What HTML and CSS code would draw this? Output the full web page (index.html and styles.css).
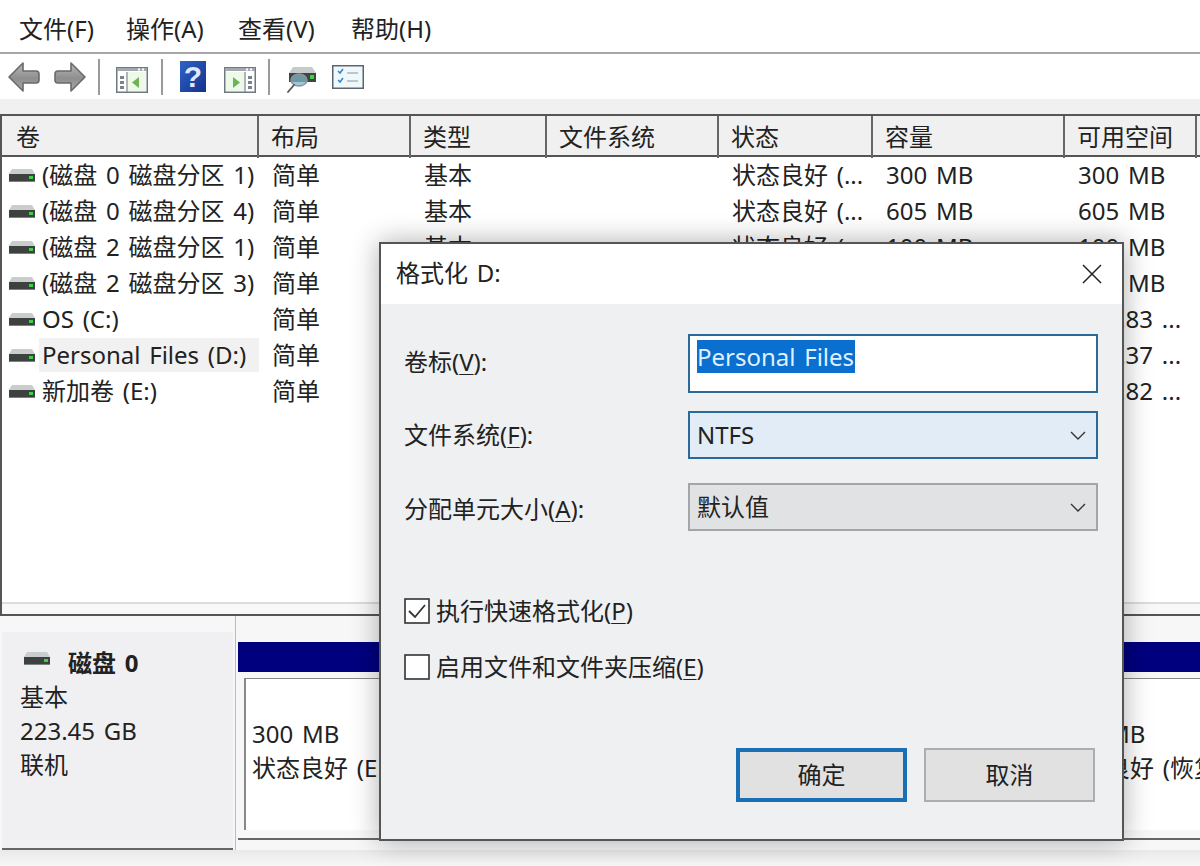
FILE: index.html
```html
<!DOCTYPE html>
<html lang="zh-CN">
<head>
<meta charset="utf-8">
<title>磁盘管理</title>
<link rel="stylesheet" href="styles.css">
</head>
<body>
<svg class="defs" width="0" height="0" aria-hidden="true">
  <defs>
    <linearGradient id="arrowFill" x1="0" y1="0" x2="0" y2="1">
      <stop offset="0" stop-color="#b9b9b9"/><stop offset=".55" stop-color="#8e8e8e"/><stop offset="1" stop-color="#a9a9a9"/>
    </linearGradient>
    <linearGradient id="helpFill" x1="0" y1="0" x2="1" y2="1">
      <stop offset="0" stop-color="#2f63c8"/><stop offset="1" stop-color="#12338c"/>
    </linearGradient>
    <symbol id="drive" viewBox="0 0 26 14">
      <path d="M3 1h20l3 5H0z" fill="#c9cdcb"/>
      <rect x="0" y="6" width="26" height="7" fill="#3d4240"/>
      <rect x="20" y="8" width="4" height="3" fill="#3fd04a"/>
      <rect x="0" y="13" width="26" height="1" fill="#7c807e"/>
    </symbol>
    <symbol id="pane" viewBox="0 0 32 26">
      <rect x=".75" y=".75" width="30.5" height="24.5" fill="#fff" stroke="#6f7780" stroke-width="1.5"/>
      <rect x="1" y="1" width="30" height="3" fill="#a2a9b0"/>
      <rect x="22" y="1.500" width="2" height="2" fill="#fff"/><rect x="26" y="1.500" width="2" height="2" fill="#fff"/>
    </symbol>
  </defs>
</svg>

<div class="window">
  <nav class="menubar">
    <span class="menu">文件(F)</span>
    <span class="menu">操作(A)</span>
    <span class="menu">查看(V)</span>
    <span class="menu">帮助(H)</span>
  </nav>

  <div class="toolbar">
    <svg class="tool arrow" viewBox="0 0 32 30"><path d="M15 1 1 15l14 14v-8h13q3 0 3-3v-6q0-3-3-3H15z" fill="url(#arrowFill)" stroke="#6a6a6a" stroke-width="1.6" stroke-linejoin="round"/></svg>
    <svg class="tool arrow fwd" viewBox="0 0 32 30"><path d="M17 1l14 14-14 14v-8H4q-3 0-3-3v-6q0-3 3-3h13z" fill="url(#arrowFill)" stroke="#6a6a6a" stroke-width="1.6" stroke-linejoin="round"/></svg>
    <i class="sep sep-a"></i>
    <svg class="tool pane-icon" viewBox="0 0 32 26">
      <use href="#pane"/>
      <path d="M11 5v20" stroke="#7b838b" stroke-width="1.200"/>
      <path d="M4 9h4v3H4zM4 14h4v3H4zM4 19h4v3H4z" fill="#7b838b"/>
      <rect x="12" y="5" width="18" height="19" fill="#eef9ea"/>
      <path d="M23 10v11l-7-5.500z" fill="#6cb552"/>
    </svg>
    <i class="sep sep-b"></i>
    <svg class="tool help" viewBox="0 0 26 31">
      <rect width="26" height="31" fill="url(#helpFill)"/>
      <text x="13" y="26" text-anchor="middle" class="help-mark">?</text>
    </svg>
    <svg class="tool pane-icon pane-two" viewBox="0 0 32 26">
      <use href="#pane"/>
      <path d="M21 5v20" stroke="#7b838b" stroke-width="1.200"/>
      <path d="M24 9h4v3h-4zM24 14h4v3h-4zM24 19h4v3h-4z" fill="#7b838b"/>
      <rect x="2" y="5" width="18" height="19" fill="#eef9ea"/>
      <path d="M9 10v11l7-5.500z" fill="#6cb552"/>
    </svg>
    <i class="sep sep-c"></i>
    <svg class="tool find" viewBox="0 0 30 27">
      <path d="M6 1h19l4 6H2z" fill="#c6cbc9"/>
      <rect x="2" y="7" width="27" height="9" fill="#3e4644"/>
      <rect x="23" y="9" width="4" height="4" fill="#3fd04a"/>
      <ellipse cx="12" cy="14" rx="8" ry="6" fill="#7fb4c4" fill-opacity=".75" stroke="#8a9499" stroke-width="1.500"/>
      <path d="M7 19 1 26" stroke="#555" stroke-width="1.800" stroke-linecap="round"/>
    </svg>
    <svg class="tool checks" viewBox="0 0 32 24">
      <rect x=".75" y=".75" width="30.500" height="22.500" fill="#eef8fd" stroke="#5d666e" stroke-width="1.500"/>
      <path d="M6 6l2 2 3-4M6 15l2 2 3-4" fill="none" stroke="#3384c9" stroke-width="1.500"/>
      <path d="M15 8h11M15 16h11" stroke="#aeb5bb" stroke-width="1.400"/>
    </svg>
  </div>

  <div class="strip"></div>

  <section class="list">
    <div class="row head">
      <div>卷</div><div>布局</div><div>类型</div><div>文件系统</div><div>状态</div><div>容量</div><div>可用空间</div><div></div>
    </div>
    <div class="row item">
      <div class="vol"><svg class="drive"><use href="#drive"/></svg><span>(磁盘 0 磁盘分区 1)</span></div><div>简单</div><div>基本</div><div></div><div>状态良好 (...</div><div>300 MB</div><div>300 MB</div><div></div>
    </div>
    <div class="row item">
      <div class="vol"><svg class="drive"><use href="#drive"/></svg><span>(磁盘 0 磁盘分区 4)</span></div><div>简单</div><div>基本</div><div></div><div>状态良好 (...</div><div>605 MB</div><div>605 MB</div><div></div>
    </div>
    <div class="row item">
      <div class="vol"><svg class="drive"><use href="#drive"/></svg><span>(磁盘 2 磁盘分区 1)</span></div><div>简单</div><div>基本</div><div></div><div>状态良好 (...</div><div>100 MB</div><div>100 MB</div><div></div>
    </div>
    <div class="row item">
      <div class="vol"><svg class="drive"><use href="#drive"/></svg><span>(磁盘 2 磁盘分区 3)</span></div><div>简单</div><div></div><div></div><div></div><div></div><div>100 MB</div><div></div>
    </div>
    <div class="row item">
      <div class="vol"><svg class="drive"><use href="#drive"/></svg><span>OS (C:)</span></div><div>简单</div><div></div><div></div><div></div><div></div><div>102.83 ...</div><div></div>
    </div>
    <div class="row item">
      <div class="vol selected"><svg class="drive"><use href="#drive"/></svg><span>Personal Files (D:)</span></div><div>简单</div><div></div><div></div><div></div><div></div><div>117.37 ...</div><div></div>
    </div>
    <div class="row item">
      <div class="vol"><svg class="drive"><use href="#drive"/></svg><span>新加卷 (E:)</span></div><div>简单</div><div></div><div></div><div></div><div></div><div>465.82 ...</div><div></div>
    </div>
  </section>

  <section class="disks">
    <aside class="disk-info">
      <div class="disk-name"><svg class="drive"><use href="#drive"/></svg><b>磁盘 0</b></div>
      <div>基本</div>
      <div>223.45 GB</div>
      <div>联机</div>
    </aside>
    <div class="disk-map">
      <div class="bar"></div>
      <div class="parts">
        <div class="part part-left"><div>300 MB</div><div>状态良好 (EFI 系统分区)</div></div>
        <div class="part part-right"><div>605 MB</div><div>状态良好 (恢复分区)</div></div>
      </div>
    </div>
  </section>
  <div class="bottom"></div>
</div>

<div class="dialog">
  <header class="dialog-title">
    <span class="dialog-name">格式化 D:</span>
    <svg class="close" viewBox="0 0 20 20"><path d="M1 1l18 18M19 1 1 19" stroke="#222" stroke-width="1.500" fill="none"/></svg>
  </header>
  <div class="dialog-body">
    <div class="form">
      <label class="lbl lbl-top">卷标(<u>V</u>):</label>
      <div class="textbox"><span class="sel">Personal Files</span></div>
      <label class="lbl">文件系统(<u>F</u>):</label>
      <div class="combo focus"><span>NTFS</span><svg class="chev" viewBox="0 0 16 9"><path d="M1 1l7 7 7-7" fill="none" stroke="#333" stroke-width="1.400"/></svg></div>
      <label class="lbl lbl-low">分配单元大小(<u>A</u>):</label>
      <div class="combo combo-low"><span>默认值</span><svg class="chev" viewBox="0 0 16 9"><path d="M1 1l7 7 7-7" fill="none" stroke="#333" stroke-width="1.400"/></svg></div>
    </div>
    <div class="checks-group">
      <div class="check"><svg class="box" viewBox="0 0 26 26"><rect x="1" y="1" width="24" height="24" fill="#fff" stroke="#333" stroke-width="1.600"/><path d="M5 13l6 6L21 7" fill="none" stroke="#333" stroke-width="1.800"/></svg><span>执行快速格式化(<u>P</u>)</span></div>
      <div class="check"><svg class="box" viewBox="0 0 26 26"><rect x="1" y="1" width="24" height="24" fill="#fff" stroke="#333" stroke-width="1.600"/></svg><span>启用文件和文件夹压缩(<u>E</u>)</span></div>
    </div>
    <div class="actions">
      <div class="btn primary">确定</div>
      <div class="btn">取消</div>
    </div>
  </div>
</div>
</body>
</html>
```

FILE: styles.css
```css
* { box-sizing: border-box; }
html, body { margin: 0; height: 100%; }
body {
  position: relative;
  width: 1200px;
  height: 866px;
  overflow: hidden;
  background: #fff;
  color: #222;
  font: 24px/34px "Noto Sans", "Noto Sans CJK SC", sans-serif;
  word-spacing: 2.5px;
}
.defs { position: absolute; }
.window { display: flex; flex-direction: column; height: 866px; }

.menubar {
  display: grid;
  grid-template-columns: 107px 112px 113px 1fr;
  height: 54px;
  padding: 12px 0 0 19px;
  border-bottom: 2px solid #a6a6a6;
  line-height: 34px;
}

.toolbar { position: relative; display: flex; align-items: center; height: 45px; padding-left: 8px; }
.tool { flex: none; display: block; }
.arrow { width: 32px; height: 30px; }
.arrow.fwd { margin-left: 14px; }
.sep { flex: none; width: 2px; height: 36px; background: #9a9a9a; }
.sep-a { margin: 0 16px 0 12px; }
.pane-icon { width: 32px; height: 26px; margin-top: 6px; }
.sep-b { margin: 0 17px 0 13px; }
.help { width: 26px; height: 31px; }
.pane-two { margin-left: 18px; }
.sep-c { margin: 0 17px 0 12px; }
.find { width: 30px; height: 27px; margin-top: 6px; }
.checks { width: 32px; height: 24px; margin: 0 0 0 15px; }
.help-mark { font: 700 30px "Liberation Sans", sans-serif; fill: #dfe8ff; }

.strip { height: 15px; background: #f0f0f0; }

.list {
  height: 502px;
  border-top: 2px solid #555;
  border-left: 2px solid #555;
  border-bottom: 2px solid #555;
  box-shadow: inset 0 -10px 0 #f8f8f8, inset 0 -12px 0 #dcdcdc;
}
.row { display: grid; grid-template-columns: 257px 152px 136px 172px 154px 192px 132px 1fr; white-space: nowrap; }
.head { height: 41px; background: #f0f0f0; border-bottom: 2px solid #555; line-height: 42px; }
.head > div { padding-left: 12px; border-right: 2px solid #666; }
.head > div:first-child { padding-left: 14px; }
.head > div:last-child { border-right: 0; }
.item { height: 36px; line-height: 36px; }
.item > div { padding-left: 13px; overflow: hidden; }
.vol { display: flex; align-items: center; gap: 7px; }
.item > .vol { padding-left: 7px; overflow: visible; }
.drive { flex: none; width: 26px; height: 14px; }
.selected span { background: #f1f1f1; padding-left: 3px; margin-left: -3px; width: 220px; height: 34px; line-height: 34px; }

.disks { display: flex; height: 234px; background: #f7f7f7; }
.disk-info {
  width: 231px;
  margin: 16px 2px 0 2px;
  padding: 14px 0 0 18px;
  background: #f0f0f2;
  border-bottom: 2px solid #666;
}
.disk-name { display: flex; align-items: center; height: 34px; }
.disk-name .drive { margin: -10px 18px 0 4px; }
.disk-name b { font-weight: 700; }
.disk-map { flex: 1; min-width: 0; padding: 26px 0 0 2px; border-left: 1px solid #bbb; }
.bar { height: 30px; background: #00007f; }
.parts { display: flex; justify-content: space-between; height: 162px; margin-top: 6px; border-bottom: 2px solid #666; white-space: nowrap; }
.part { padding-top: 38px; overflow: hidden; background: #fff; border-top: 1px solid #888; margin-bottom: 8px; }
.part-left { width: 260px; margin-left: 6px; padding-left: 6px; border-left: 2px solid #888; }
.part-right { width: 151px; padding-left: 9px; }
.bottom { flex: 1; background: linear-gradient(#e9e9e9, #f7f7f7); }

.dialog {
  position: absolute;
  left: 379px;
  top: 242px;
  width: 745px;
  height: 599px;
  display: flex;
  flex-direction: column;
  background: #eff0f2;
  border: 2px solid #555;
  box-shadow: 0 0 26px rgba(0, 0, 0, .32);
}
.dialog-title {
  display: flex;
  align-items: center;
  justify-content: space-between;
  height: 60px;
  flex: none;
  padding: 0 20px 0 15px;
  background: #fff;
}
.dialog-name { margin-bottom: 3px; }
.close { width: 20px; height: 20px; }
.dialog-body { display: flex; flex-direction: column; padding: 30px 0 0 23px; }
.form { display: grid; grid-template-columns: 284px 410px; grid-template-rows: 59px 48px 54px; row-gap: 18px; }
.lbl { align-self: center; }
.lbl-top { margin-bottom: 4px; }
.lbl-low { margin-top: 10px; }
.combo-low { margin-top: 6px; }
u { text-underline-offset: 3px; text-decoration-thickness: 1px; }
.textbox { padding: 4px 0 0 7px; background: #fff; border: 2px solid #2b6a98; }
.sel { display: inline-block; height: 33px; padding-right: 1px; line-height: 33px; background: #0b6fd0; color: #dff1ff; }
.combo { display: flex; align-items: center; justify-content: space-between; padding: 0 10px 0 7px; background: #e0e2e4; border: 2px solid #a3a6a9; }
.combo.focus { background: #e1ecf7; border-color: #2b6a98; }
.chev { width: 16px; height: 9px; }
.checks-group { display: flex; flex-direction: column; gap: 30px; margin-top: 67px; }
.check { display: flex; align-items: center; gap: 6px; height: 26px; }
.box { flex: none; width: 26px; height: 26px; }
.actions { display: flex; gap: 17px; margin: 68px 0 0 332px; }
.btn { display: flex; align-items: center; justify-content: center; width: 171px; height: 54px; background: #e1e1e1; border: 2px solid #adadad; }
.btn.primary { border: 4px solid #1a6fb5; }
```
